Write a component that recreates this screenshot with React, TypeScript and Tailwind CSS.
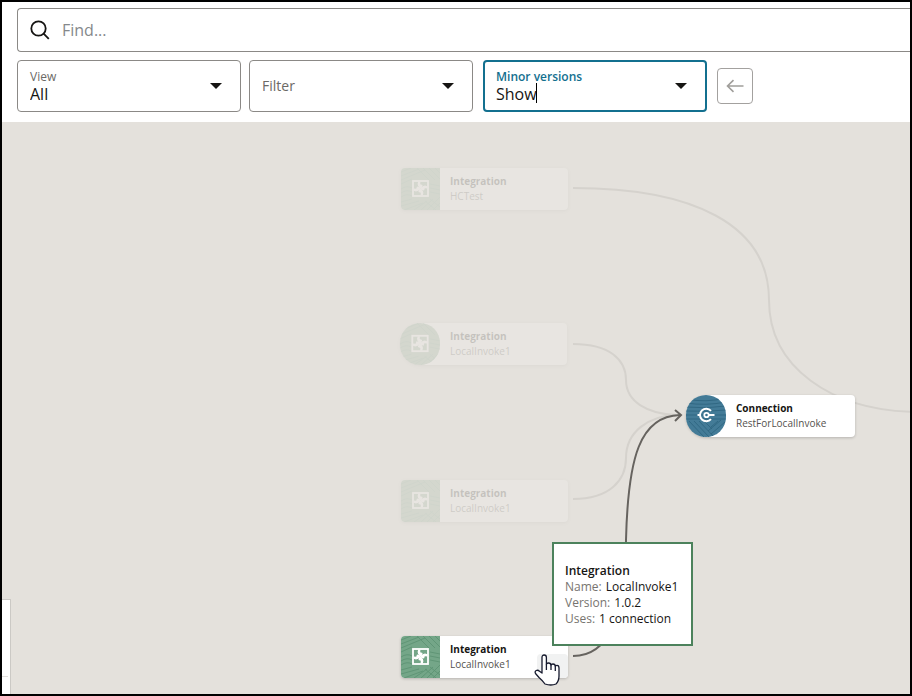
import React, { useState } from 'react';

type NodeData = {
  id: string;
  kind: 'Integration' | 'Connection';
  name: string;
  x: number;
  y: number;
  round?: boolean;
  faded?: boolean;
};

const nodes: NodeData[] = [
  { id: 'hctest', kind: 'Integration', name: 'HCTest', x: 399, y: 46, faded: true },
  { id: 'local-1', kind: 'Integration', name: 'LocalInvoke1', x: 398, y: 201, round: true, faded: true },
  { id: 'local-2', kind: 'Integration', name: 'LocalInvoke1', x: 399, y: 358, faded: true },
  { id: 'local-3', kind: 'Integration', name: 'LocalInvoke1', x: 399, y: 514 },
  { id: 'rest', kind: 'Connection', name: 'RestForLocalInvoke', x: 684, y: 273, round: true },
];

const fadedEdges = [
  'M571 66 C 690 66 767 102 767 178 C 767 246 830 288 912 290',
  'M571 222 C 608 222 624 238 624 258 C 624 280 646 292 674 293',
  'M571 377 C 608 377 624 358 624 336 C 624 310 646 294 674 293',
];

const details = [
  { label: 'Name:', value: 'LocalInvoke1' },
  { label: 'Version:', value: '1.0.2' },
  { label: 'Uses:', value: '1 connection' },
];

const bladeAngles = [0, 90, 180, 270];

const IntegrationIcon: React.FC<{ faded?: boolean }> = ({ faded }) => (
  <svg viewBox="0 0 39 42" preserveAspectRatio="xMidYMid slice" className={`h-full w-full ${faded ? 'bg-[#80a084]' : 'bg-[#74a688]'}`} aria-hidden="true">
    <g fill="none" stroke="#5d9374" strokeWidth="0.9">
      <path d="M0 4 L10 0 M0 8 L18 1 M0 12 L24 2 M0 16 L11 11 M16 0 L28 12 M22 0 L34 12 M28 0 L39 11 M34 0 L39 5" />
      <path d="M0 21 Q6 17 11 20 M0 25 Q6 21 11 24 M0 29 Q6 25 11 28 M29 16 L39 18 M29 20 L39 22 M29 24 L39 26" />
      <path d="M0 34 L11 31 M0 38 L18 33 M3 42 L22 35 M13 42 L26 33 M20 42 L32 31 M26 42 L39 29 M32 42 L39 35 M24 33 L35 42 M29 31 L39 39" />
    </g>
    <rect x="12" y="13" width="15" height="15" fill="none" stroke="#fff" strokeWidth="1.8" />
    {bladeAngles.map(angle => (
      <path
        key={angle}
        d="M17.200 13.500 H19.400 L19.200 16.200 L21.600 17 L20.600 20.500 H19.500 L17.200 18.300 L16.600 16 Z"
        fill="#fff"
        transform={`rotate(${angle} 19.500 20.500)`}
      />
    ))}
  </svg>
);

const ConnectionIcon = () => (
  <svg viewBox="0 0 40 42" preserveAspectRatio="none" className="h-full w-full bg-[#437b97]" aria-hidden="true">
    <g fill="none" stroke="#316883" strokeWidth="1">
      <path d="M0 4 Q20 8 40 3 M0 8 Q20 11 40 7 M0 12 Q20 14 40 11 M0 16 Q20 17 40 15 M0 20 H40 M0 24 H40" />
      <path d="M3 26 L18 42 M8 26 L23 42 M13 26 L28 42 M18 26 L26 34 M22 36 L35 25 M25 39 L39 27 M28 42 L40 32 M25 32 L32 26" />
    </g>
    <path d="M25 15.800 A6.300 6.300 0 1 0 25 24.200" fill="none" stroke="#fff" strokeWidth="2" />
    <circle cx="20.500" cy="20" r="2.200" fill="none" stroke="#fff" strokeWidth="1.800" />
    <path d="M22.500 20 H28.500 M11.500 20 H14" fill="none" stroke="#fff" strokeWidth="2" />
  </svg>
);

const DiagramNode: React.FC<{ node: NodeData }> = ({ node }) => (
  <div
    className={`absolute flex h-[42px] rounded-[4px] bg-white shadow-[0_1px_3px_rgba(0,0,0,0.2)] ${
      node.kind === 'Connection' ? 'w-[169px]' : 'w-[167px]'
    } ${node.faded ? 'opacity-15' : ''} ${node.round ? 'rounded-l-[21px]' : ''}`}
    style={{ left: node.x, top: node.y }}
  >
    <div className={`h-full shrink-0 overflow-hidden ${node.round ? 'w-10 rounded-full' : 'w-[39px] rounded-l-[4px]'}`}>
      {node.kind === 'Connection' ? <ConnectionIcon /> : <IntegrationIcon faded={node.faded} />}
    </div>
    <div className="flex flex-col justify-center pl-[10px] text-[10px] leading-[15px] whitespace-nowrap">
      <span className="font-bold text-[#161513]">{node.kind}</span>
      <span className="text-[#55524e]">{node.name}</span>
    </div>
  </div>
);

type FieldProps = {
  id: string;
  label: string;
  options: string[];
  active?: boolean;
};

const SelectField: React.FC<FieldProps> = ({ id, label, options, active }) => {
  const [value, setValue] = useState(options[0] || '');

  return (
    <div
      className={`relative flex h-[52px] w-56 flex-col justify-center rounded-[4px] bg-white ${
        active ? 'border-2 border-[#13708f] px-[11px]' : 'border border-[#8b8986] px-3'
      }`}
    >
      {value && (
        <label htmlFor={id} className={`text-[12px] leading-4 ${active ? 'font-semibold text-[#13708f]' : 'font-medium text-[#6b6966]'}`}>
          {label}
        </label>
      )}
      <div className="flex items-center">
        <select
          id={id}
          aria-label={label}
          value={value}
          onChange={(e) => setValue(e.target.value)}
          className={`w-full appearance-none bg-transparent outline-none ${value ? 'h-[18px] text-[16px] leading-[18px] text-[#161513]' : 'h-5 text-[14px] leading-5 text-[#6b6966]'}`}
        >
          {options.length === 0 && <option value="">{label}</option>}
          {options.map(o => <option key={o} value={o}>{o}</option>)}
        </select>
        {active && <span className="absolute top-[21px] left-[51px] h-5 w-px bg-black" />}
      </div>
      <svg viewBox="0 0 12 6" className="pointer-events-none absolute top-1/2 right-[18px] h-[6px] w-3 -translate-y-1/2" aria-hidden="true">
        <path d="M0 0 H12 L6 6 Z" fill="#161513" />
      </svg>
    </div>
  );
};

const App: React.FC = () => {
  const [query, setQuery] = useState('');

  return (
    <div className="flex min-h-screen flex-col border-2 border-black bg-white font-['Open_Sans','Noto_Sans',sans-serif]">
      <header className="flex flex-col gap-2 pt-[6px] pb-[10px] pl-[15px]">
        <div className="flex h-11 items-center gap-3 rounded-l-[4px] border border-r-0 border-[#8b8986] pl-3">
          <svg viewBox="0 0 20 20" className="h-5 w-5 shrink-0" fill="none" stroke="#161513" strokeWidth="1.8" aria-hidden="true">
            <circle cx="8.500" cy="8.500" r="7.200" />
            <path d="M13.600 13.600 L18.800 18.800" />
          </svg>
          <input
            type="text"
            aria-label="Find"
            placeholder="Find..."
            value={query}
            onChange={(e) => setQuery(e.target.value)}
            className="h-full w-full bg-transparent text-[16px] text-[#161513] outline-none placeholder:text-[#85888b]"
          />
        </div>
        <div className="flex items-center gap-[10px]">
          <div className="flex gap-2">
            <SelectField id="view" label="View" options={['All']} />
            <SelectField id="filter" label="Filter" options={[]} />
          </div>
          <SelectField id="minor-versions" label="Minor versions" options={['Show', 'Hide']} active />
          <button type="button" aria-label="Back" className="flex h-9 w-9 items-center justify-center rounded-[4px] border border-[#a3a19f]">
            <svg viewBox="0 0 18 14" className="h-[14px] w-[18px]" fill="none" stroke="#a09e9b" strokeWidth="1.6" aria-hidden="true">
              <path d="M17.500 7 H2 M7.500 1.200 L1.500 7 L7.500 12.800" />
            </svg>
          </button>
        </div>
      </header>

      <main className="relative flex-1 overflow-hidden bg-[#e4e1dc]">
        <svg className="absolute inset-0 h-full w-full" fill="none" aria-hidden="true">
          {fadedEdges.map(d => <path key={d} d={d} stroke="#d5d2cd" strokeWidth="2" />)}
          <path d="M571 534 C 606 534 624 495 624 418 C 626 335 638 294 678 293" stroke="#66635f" strokeWidth="2" />
          <path d="M673 288 L679 293 L673 299" stroke="#66635f" strokeWidth="2" />
        </svg>

        {nodes.map(n => <DiagramNode key={n.id} node={n} />)}

        <div className="absolute top-[532px] left-[535px] h-6 w-[31px] rounded-[4px] bg-[#f1f2f2]" />

        {/* Hover details */}
        <div role="tooltip" className="absolute top-[420px] left-[550px] h-[104px] w-[141px] border-2 border-[#4c825c] bg-white pt-[19px] pl-[11px] text-[12px] leading-4 whitespace-nowrap">
          <p className="font-semibold text-[#161513]">Integration</p>
          {details.map(d => (
            <p key={d.label} className="flex gap-1">
              <span className="text-[#77746f]">{d.label}</span>
              <span className="text-[#161513]">{d.value}</span>
            </p>
          ))}
        </div>

        <svg viewBox="0 0 26 32" className="absolute top-[532px] left-[532px] h-8 w-[26px]" aria-hidden="true">
          <path
            d="M8 19 V3.500 Q8 1 10.200 1 Q12.400 1 12.400 3.500 V10.500 Q12.400 9 14.500 9 Q17 9 17 11.500 Q17 10 19 10 Q21.300 10 21.300 12.500 Q21.300 11.300 23 11.300 Q25 11.300 25 14 V22 Q25 27 22 30 Q17 32 11 30 Q9 27 5 23.500 L1.500 19.500 Q0.500 17.500 2.200 16.500 Q4 15.800 5.500 17.200 Z"
            fill="#fff"
            stroke="#161a2e"
            strokeWidth="1.300"
            strokeLinejoin="round"
          />
          <path d="M12.400 10.500 V16 M17 11.500 V16 M21.300 12.500 V17" stroke="#161a2e" strokeWidth="1.300" />
        </svg>

        <div className="absolute -bottom-px left-0 h-[96px] w-[9px] border-t border-r border-[#cbc9c5] bg-white pt-[76px]">
          <div className="w-[6px] border-t border-[#e2e0dd]" />
        </div>
      </main>
    </div>
  );
};

export default App;
